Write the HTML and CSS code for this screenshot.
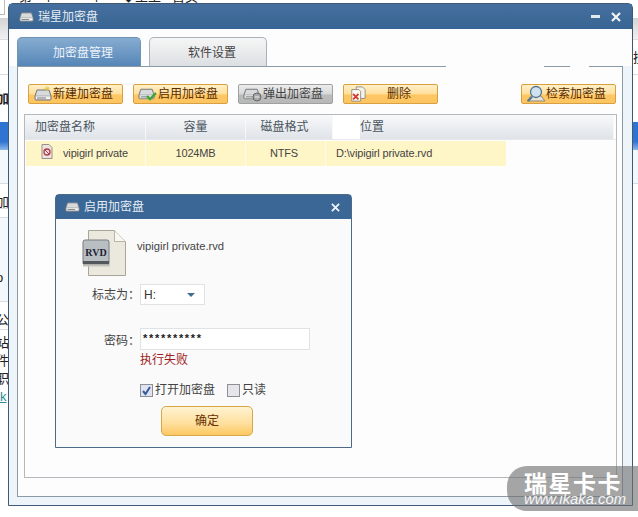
FILE: index.html
```html
<!DOCTYPE html>
<html lang="zh">
<head>
<meta charset="utf-8">
<title>瑞星加密盘</title>
<link rel="stylesheet" href="styles.css">
</head>
<body>
<svg class="defs" width="0" height="0">
  <symbol id="drive" viewBox="0 0 18 12">
    <path d="M3 1h12l2 6v3a1 1 0 0 1-1 1H2a1 1 0 0 1-1-1V7z" fill="#d8dadc" stroke="#6f7478"/>
    <path d="M1.500 7h15v3.500h-15z" fill="#f4f4f4" stroke="#8a8f94" stroke-width=".6"/>
    <path d="M3 9h9" stroke="#777" stroke-width="1"/>
  </symbol>
</svg>

<div class="desk">
  <div class="strip left">
    <div class="r h15 boxed"></div>
    <div class="r h3"></div>
    <div class="r h22 grey"></div>
    <div class="r h35 lined"></div>
    <div class="r h47 clip bold">加</div>
    <div class="r h28 blue"></div>
    <div class="r h34 pale lined"></div>
    <div class="r h25 clip lined p12">加</div>
    <div class="r h9 lined"></div>
    <div class="r h84 pale lined clip low">o</div>
    <div class="r h28 clip lined p8">公</div>
    <div class="r h4"></div>
    <div class="r h18 clip">站</div>
    <div class="r h18 clip">件</div>
    <div class="r h18 clip">职</div>
    <div class="r h18 clip link"><u>k</u></div>
  </div>
  <div class="strip right">
    <div class="r h18"></div>
    <div class="r h22 grey"></div>
    <div class="r h35 lined clip mid">搜</div>
    <div class="r h47"></div>
    <div class="r h28 blue"></div>
    <div class="r h34 pale lined"></div>
  </div>
</div>

<div class="top-text">
  <span class="t1">第</span><span class="t2">个</span><span class="t3">个</span><span class="t4">◆主主</span><span class="t5">首页</span>
</div>

<main class="window">
  <header class="titlebar">
    <svg class="ticon"><use href="#drive"/></svg>
    <span class="ttext">瑞星加密盘</span>
    <span class="min"></span>
    <svg class="close" viewBox="0 0 10 10"><path d="M1 1l8 8M9 1l-8 8" stroke="#f2f5f8" stroke-width="2.200"/></svg>
  </header>

  <div class="content">
    <nav class="tabs">
      <div class="tab active">加密盘管理</div>
      <div class="tab">软件设置</div>
      <i class="erase e1"></i>
      <i class="erase e2"></i>
    </nav>
    <section class="panel">
      <div class="toolbar">
        <button class="btn">
          <svg class="bicon" viewBox="0 0 20 16"><use href="#drive" x="1" y="3" width="18" height="12"/><path d="M14 0v5M11.500 2.500h5M12 1l4 3M16 1l-4 3" stroke="#e8c848" stroke-width=".8"/></svg>
          <span>新建加密盘</span>
        </button>
        <button class="btn">
          <svg class="bicon" viewBox="0 0 20 16"><use href="#drive" x="0" y="2" width="17" height="12"/><path d="M9 10l3 3 6-6" fill="none" stroke="#3fa33a" stroke-width="2.400"/></svg>
          <span>启用加密盘</span>
        </button>
        <button class="btn off">
          <svg class="bicon" viewBox="0 0 20 16"><use href="#drive" x="0" y="2" width="17" height="12"/><circle cx="14" cy="11" r="4" fill="#a8a8a8" stroke="#666"/><path d="M12 11h4" stroke="#eee"/></svg>
          <span>弹出加密盘</span>
        </button>
        <button class="btn wide">
          <svg class="bicon" viewBox="0 0 20 18"><path d="M8 1h7l3 3v10H8z" fill="#f6f3ea" stroke="#8b8b80"/><path d="M3 4h8l2 2v11H3z" fill="#fbf9f2" stroke="#8b8b80"/><path d="M4.500 9l6 6M10.500 9l-6 6" stroke="#d83a30" stroke-width="2"/></svg>
          <span>删除</span>
        </button>
        <button class="btn push">
          <svg class="bicon search" viewBox="0 0 20 18"><path d="M1 16l4-5h10l4 5z" fill="#e8e4d8" stroke="#8a8a80"/><circle cx="10" cy="7" r="5.500" fill="#cfe2f2" stroke="#55738f" stroke-width="1.300"/><path d="M6 12l-4 4" stroke="#55738f" stroke-width="2"/></svg>
          <span>检索加密盘</span>
        </button>
      </div>

      <div class="grid">
        <div class="ghead">
          <div class="gh first">加密盘名称</div>
          <div class="gh center">容量</div>
          <div class="gh center fmt">磁盘格式</div>
          <div class="gh blank"></div>
          <div class="gh">位置</div>
        </div>
        <div class="grow">
          <div class="gc name">
            <svg class="ficon" viewBox="0 0 12 15"><path d="M1 .5h7l3 3v11H1z" fill="#eee3de" stroke="#998f8c"/><circle cx="6" cy="8" r="3" fill="none" stroke="#b23a4a" stroke-width="1.300"/><path d="M4 6l4 4" stroke="#b23a4a"/></svg>
            <span>vipigirl private</span>
          </div>
          <div class="gc center">1024MB</div>
          <div class="gc center ntfs">NTFS</div>
          <div class="gc path">D:\vipigirl private.rvd</div>
        </div>
      </div>
    </section>
  </div>

  <section class="dialog">
    <header class="dtitle">
      <svg class="ticon"><use href="#drive"/></svg>
      <span class="ttext">启用加密盘</span>
      <svg class="dclose" viewBox="0 0 10 10"><path d="M1 1l8 8M9 1l-8 8" stroke="#f2f5f8" stroke-width="2"/></svg>
    </header>
    <div class="dbody">
      <div class="filerow">
        <svg class="rvd" viewBox="0 0 44 46">
          <path d="M6.500 .5h26l11 11v34h-37z" fill="#ebe8de" stroke="#a9a698"/>
          <path d="M32.500 .5v11h11" fill="#f8f7f2" stroke="#b8b5a8"/>
          <rect x="1" y="10" width="26" height="25" rx="2" fill="#b9bec3" stroke="#777c80"/>
          <rect x="1" y="31" width="26" height="3" fill="#55585b"/>
          <path d="M1 35.500h27" stroke="#c4c4ba" stroke-width="2"/>
          <text x="14" y="26" class="rvdtext">RVD</text>
        </svg>
        <span class="fname">vipigirl private.rvd</span>
      </div>
      <div class="frow mark">
        <label class="flabel">标志为：</label>
        <div class="select"><span>H:</span><i class="arrow"></i></div>
      </div>
      <div class="frow pass">
        <label class="flabel">密码：</label>
        <div class="input">**********</div>
      </div>
      <div class="err">执行失败</div>
      <div class="checks">
        <span class="cb on"><svg viewBox="0 0 11 11"><path d="M2 6l2.500 3L9 2" fill="none" stroke="#3a5a9a" stroke-width="2"/></svg></span>
        <span class="ctext">打开加密盘</span>
        <span class="cb"></span>
        <span>只读</span>
      </div>
      <button class="ok">确定</button>
    </div>
  </section>
</main>

<aside class="mark-logo">
  <div class="ml1">瑞星卡卡</div>
  <div class="ml2">www.ikaka.com</div>
</aside>
</body>
</html>
```

FILE: styles.css
```css
* { box-sizing: border-box; }
html, body { margin: 0; height: 517px; }
body {
  position: relative;
  overflow: hidden;
  background: #fff;
  font: 12px/16px "Liberation Sans", "Noto Sans CJK SC", sans-serif;
  color: #333;
}
.defs { position: absolute; }

.desk { display: flex; justify-content: space-between; height: 517px; }
.strip { display: flex; flex-direction: column; }
.strip.left { width: 9px; }
.strip.right { width: 8px; }
.r { flex: none; }
.h3 { height: 3px; } .h4 { height: 4px; } .h9 { height: 9px; } .h15 { height: 15px; } .h18 { height: 18px; }
.h22 { height: 22px; } .h25 { height: 25px; } .h28 { height: 28px; } .h34 { height: 34px; }
.h35 { height: 35px; } .h47 { height: 47px; } .h84 { height: 84px; }
.boxed { width: 5px; border: solid #bbb; border-width: 0 1px 1px 0; }
.grey { background: linear-gradient(#d4d4d4, #f0f0f0); border-bottom: 1px solid #ddd; }
.lined { border-bottom: 1px solid #d8dde2; }
.pale { background: #f3f8fc; }
.blue { background: linear-gradient(#2f74d0 70%, #8fb8e8); }
.clip { overflow: hidden; font-size: 13px; color: #222; white-space: nowrap; display: flex; align-items: center; justify-content: flex-start; }
.left .clip { text-indent: -4px; }
.bold { font-weight: bold; }
.p12 { padding-top: 12px; }
.p8 { padding-top: 8px; }
.low { align-items: flex-end; padding-bottom: 15px; }
.mid { padding-top: 2px; }
.right .clip { text-indent: 3px; }
.left .link { color: #2a8a9a; text-indent: 0; }

.top-text { position: absolute; left: 0; top: 0; width: 240px; height: 3px; overflow: hidden; font-size: 13px; }
.top-text span { position: absolute; top: -10px; line-height: 14px; color: #222; }
.t1 { left: 19px; } .t2 { left: 42px; } .t3 { left: 90px; } .t4 { left: 122px; } .t5 { left: 172px; }

.window {
  position: absolute;
  left: 8px; top: 3px;
  width: 625px; height: 503px;
  background: #fdfdfd;
  border: 1px solid #3e5a74;
  border-radius: 5px 5px 0 0;
  display: flex;
  flex-direction: column;
}
.titlebar {
  flex: none;
  height: 25px;
  background: linear-gradient(#456f9e, #386593);
  display: flex;
  align-items: center;
  padding: 0 11px 0 10px;
}
.ticon { width: 15px; height: 10px; flex: none; margin-right: 4px; }
.ttext { color: #e6edf4; }
.min { margin-left: auto; width: 9px; height: 3px; background: #e4e9ee; margin-right: 11px; }
.close { width: 10px; height: 10px; }

.content { flex: 1; padding: 8px 9px 8px 8px; background: #edf5fb; display: flex; flex-direction: column; }
.tabs { position: relative; height: 29px; display: flex; gap: 8px; flex: none; background: #fdfdfd; margin: -8px -9px 0 -8px; padding: 8px 9px 0 8px; box-sizing: content-box; }
.tab {
  height: 29px;
  width: 118px;
  padding-left: 8px;
  border: 1px solid #a9b2ba;
  border-bottom: 0;
  border-radius: 5px 5px 0 0;
  background: linear-gradient(#f6f6f6, #dcdfe2);
  text-align: center;
  line-height: 30px;
  color: #444;
}
.tab.active {
  width: 124px;
  background: linear-gradient(#86acd0, #5686b8);
  border-color: #6f93b4;
  color: #eef4fa;
}
.erase { position: absolute; background: #fdfdfd; height: 2px; top: 36px; }
.e1 { left: 437px; width: 98px; }
.e2 { left: 561px; width: 19px; }

.panel {
  flex: 1;
  min-height: 0;
  background: #fdfdfd;
  border: 1px solid #8c9aa6;
  display: flex;
  flex-direction: column;
}
.toolbar { flex: none; display: flex; gap: 10px; padding: 17px 6px 0 10px; }
.btn {
  width: 95px; height: 20px;
  padding: 0 0 0 4px;
  display: flex;
  align-items: center;
  border: 1px solid #d8a040;
  border-radius: 2px;
  background: linear-gradient(#fff0c8, #ffdf9c 50%, #fdc763 55%, #fdc562);
  font: inherit;
  color: #5a2c00;
}
.btn.off { background: linear-gradient(#ededed, #d8d8d8 50%, #bcbcbc 55%, #b8b8b8); border-color: #a0a0a0; color: #444; }
.btn.wide span { margin-left: 19px; }
.btn.push { margin-left: auto; }
.bicon { width: 20px; height: 16px; flex: none; }
.search { height: 18px; }

.grid {
  flex: 1;
  margin: 10px 5px 18px 6px;
  border: 1px solid #b5b9bd;
  background: #fdfdfd;
}
.ghead {
  height: 25px;
  display: grid;
  grid-template-columns: 121px 100px 87px 27px 254px;
  border-bottom: 1px solid #e6e8ea;
}
.gh {
  background: linear-gradient(#f8f9fa, #dfe3e8);
  border-right: 1px solid #f8f8f8;
  line-height: 24px;
  color: #4a5560;
}
.first { padding-left: 10px; }
.gh.blank { background: #fff; border: 0; }
.gh.fmt { padding-right: 9px; }
.grow {
  width: 480px;
  height: 25px;
  margin: 1px 0 0 1px;
  background: #fff6c8;
  display: grid;
  grid-template-columns: 120px 100px 80px 1fr;
  font-size: 11px;
  letter-spacing: -.15px;
  line-height: 25px;
  color: #444;
}
.gc { border-right: 1px solid #fdfaf0; }
.center { text-align: center; }
.ntfs { padding-right: 3px; }
.name { display: flex; align-items: center; padding-left: 15px; gap: 10px; }
.ficon { width: 12px; height: 15px; flex: none; margin-top: -4px; }
.path { border: 0; padding-left: 10px; }

.dialog {
  position: absolute;
  left: 46px; top: 190px;
  width: 297px; height: 254px;
  background: #fafafa;
  border: 1px solid #4a6a88;
  border-radius: 4px 4px 0 0;
  display: flex;
  flex-direction: column;
}
.dtitle {
  flex: none;
  height: 24px;
  background: #3a6795;
  display: flex;
  align-items: center;
  padding: 0 11px 0 9px;
}
.dclose { width: 9px; height: 9px; margin-left: auto; }
.dbody { flex: 1; display: flex; flex-direction: column; align-items: flex-start; }
.filerow { display: flex; margin: 11px 0 0 26px; height: 46px; }
.rvd { width: 44px; height: 46px; }
.rvdtext { font: bold 10px "Liberation Serif", serif; text-anchor: middle; fill: #223; }
.fname { margin: 8px 0 0 11px; color: #444; font-size: 11.200px; }
.frow { display: flex; align-items: center; }
.mark { margin-top: 8px; height: 21px; }
.pass { margin-top: 23px; height: 22px; }
.flabel { width: 84px; text-align: left; padding-left: 36px; color: #444; }
.mark .flabel { padding: 1px 0 0 36px; }
.pass .flabel { padding: 3px 0 0 48px; }
.select {
  width: 65px; height: 21px;
  border: 1px solid #dfe3e6;
  background: #fff;
  padding-left: 3px;
  display: flex;
  align-items: center;
  justify-content: space-between;
  padding-right: 9px;
}
.arrow { width: 0; height: 0; border: 4px solid transparent; border-top: 4px solid #3f6f90; border-bottom: 0; }
.input {
  width: 170px; height: 22px;
  border: 1px solid #dfe3e6;
  background: #fff;
  padding: 2px 0 0 2px;
  line-height: 14px;
  color: #222;
  font-weight: bold;
  font-size: 11px;
  letter-spacing: 1.700px;
}
.err { margin: 2px 0 0 84px; color: #a01c1c; }
.checks { display: flex; align-items: center; margin: 14px 0 0 84px; color: #444; }
.cb { width: 13px; height: 13px; border: 1px solid #8e8e96; background: #e6e6ea; margin-right: 2px; display: flex; }
.cb.on { background: #dfe4f2; }
.ctext { margin-right: 12px; }
.ok {
  width: 92px; height: 30px;
  margin: 8px 0 0 105px;
  border: 1px solid #d8a848;
  border-radius: 5px;
  background: linear-gradient(#fff3d2, #ffdf9c 60%, #fcc761);
  font: inherit;
  color: #6a3000;
}

.mark-logo {
  position: absolute;
  left: 507px; top: 466px;
  width: 131px; height: 45px;
  border-radius: 20px 0 0 20px;
  background: rgba(112, 112, 112, .62);
  color: #fff;
  padding: 6px 0 0 17px;
}
.ml1 { font: bold 23px/20px "Noto Sans CJK SC", sans-serif; letter-spacing: 1.500px; white-space: nowrap; }
.ml2 { font: italic 14.800px/12px "Liberation Sans", sans-serif; margin-top: 1px; opacity: .9; white-space: nowrap; }
```
